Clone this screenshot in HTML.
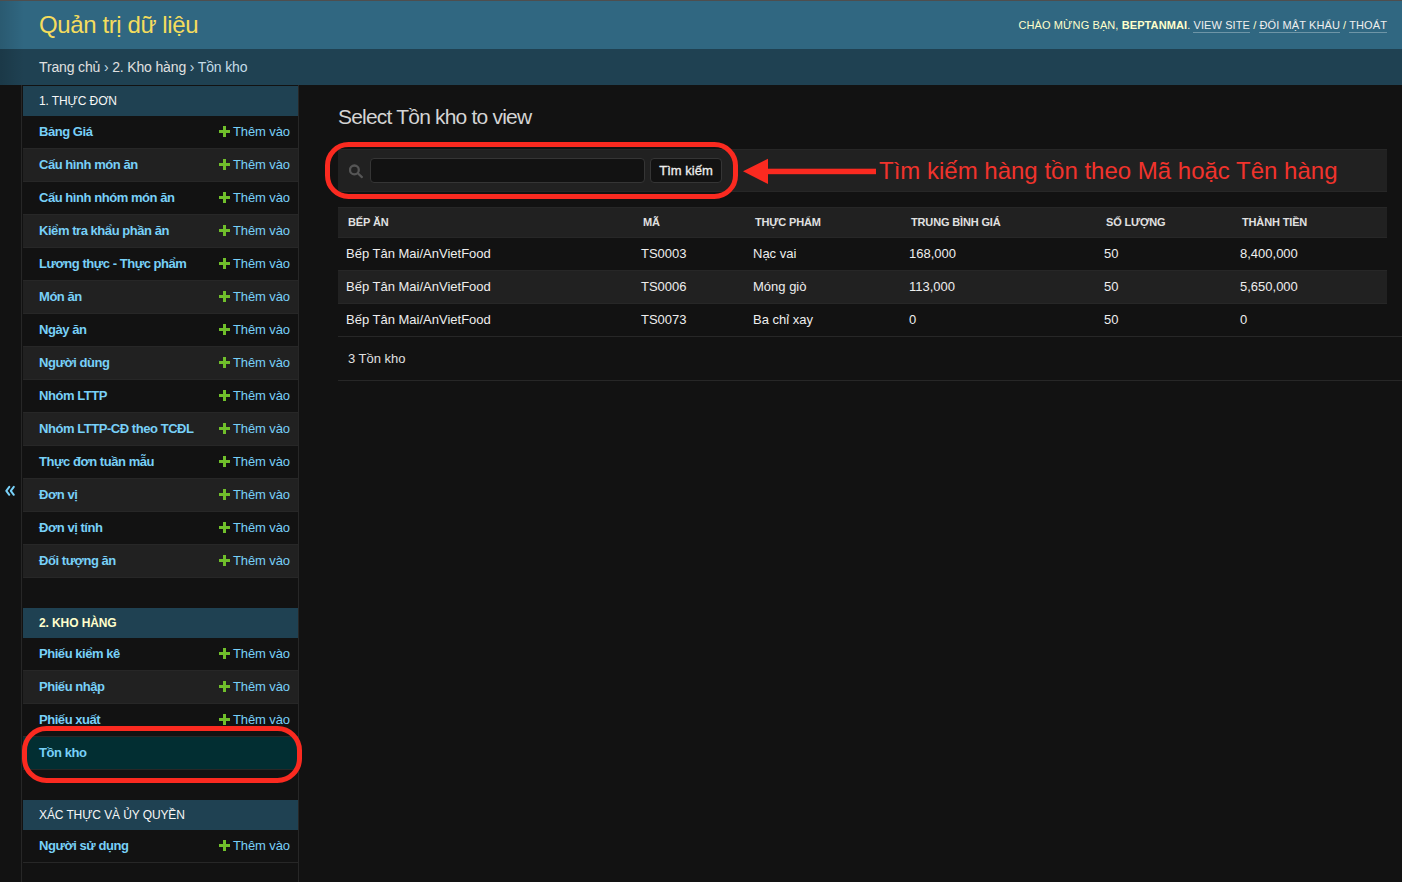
<!DOCTYPE html>
<html lang="vi">
<head>
<meta charset="utf-8">
<title>Tồn kho</title>
<style>
html,body{margin:0;padding:0;}
body{width:1402px;height:882px;overflow:hidden;position:relative;background:#121212;font-family:"Liberation Sans",sans-serif;color:#eeeeee;}
.abs{position:absolute;}
#topline{left:0;top:0;width:1402px;height:1px;background:#4e4e4e;}
#header{left:0;top:1px;width:1402px;height:48px;background:#306781;}
#brand{left:39px;top:0;font-size:24px;line-height:47px;letter-spacing:-0.4px;color:#f5dd5d;white-space:nowrap;}
#usertools{right:15px;top:1px;font-size:11px;line-height:47px;color:#ffffcc;text-transform:uppercase;letter-spacing:0.1px;white-space:nowrap;}
#usertools b{color:#ffffcc;}
#usertools a{color:#f0f0f0;text-decoration:none;border-bottom:1px solid rgba(255,255,255,0.3);padding-bottom:1px;}
#crumbs{left:0;top:49px;width:1402px;height:36px;background:#1f4152;}
#crumbtext{left:39px;top:0px;font-size:14px;line-height:37px;letter-spacing:-0.15px;color:#c4dce8;white-space:nowrap;}
#crumbtext a{color:#e0e0e0;text-decoration:none;}
#shade{left:0;top:1px;width:24px;height:84px;background:linear-gradient(to right,rgba(0,0,0,0.13),rgba(0,0,0,0));}
#toggle{left:0;top:85px;width:21px;height:797px;border-right:1px solid #272727;}
#toggle span{position:absolute;left:4px;top:394px;font-size:20px;color:#78d0f8;}
#sidebar{left:23px;top:86px;width:275px;height:796px;}
#sideborder{left:298px;top:85px;width:1px;height:797px;background:#272727;}
.mod{position:absolute;left:0;width:275px;}
.cap{height:30px;background:#1f4152;color:#f7f7f7;font-size:12px;letter-spacing:-0.1px;line-height:30px;padding-left:16px;box-sizing:border-box;text-transform:uppercase;}
.cap.cur{color:#ffffcc;font-weight:bold;}
.row{position:relative;height:33px;box-sizing:border-box;border-bottom:1px solid #272727;background:#121212;font-size:13px;}
.row.e{background:#212121;}
.row.sel{background:#022e32;}
.row .nm{position:absolute;left:16px;top:0;line-height:32px;color:#78d0f8;font-weight:bold;letter-spacing:-0.45px;white-space:nowrap;}
.row .add{position:absolute;right:8px;top:0;line-height:32px;color:#78d0f8;white-space:nowrap;padding-left:14px;letter-spacing:-0.1px;}
.plus{position:absolute;left:0;top:10px;width:11px;height:11px;}
.plus:before{content:"";position:absolute;left:4px;top:0;width:3px;height:11px;background:#70bf2b;}
.plus:after{content:"";position:absolute;left:0;top:4px;width:11px;height:3px;background:#70bf2b;}

#content{left:0;top:0;width:1402px;height:882px;}
#h1{left:338px;top:105px;font-size:21px;line-height:24px;letter-spacing:-0.8px;color:#d4d4d4;white-space:nowrap;}
#toolbar{left:338px;top:149px;width:1049px;height:43px;background:#212121;border-top:1px solid #272727;border-bottom:1px solid #272727;box-sizing:border-box;}
#searchicon{left:11px;top:14px;}
#searchbar{left:32px;top:8px;width:275px;height:25px;box-sizing:border-box;background:#121212;border:1px solid #353535;border-radius:4px;}
#searchbtn{left:312px;top:8px;width:72px;-webkit-text-stroke:0.3px #eeeeee;height:25px;box-sizing:border-box;background:#121212;border:1px solid #353535;border-radius:4px;font-size:13px;line-height:23px;text-align:center;color:#eeeeee;white-space:nowrap;}
#thead{left:338px;top:207px;width:1049px;height:31px;background:#212121;border-top:1px solid #272727;border-bottom:1px solid #272727;box-sizing:border-box;}
.th{position:absolute;top:0;line-height:29px;font-size:11px;font-weight:bold;letter-spacing:-0.15px;color:#e0e0e0;text-transform:uppercase;white-space:nowrap;}
.trow{left:338px;width:1049px;height:33px;box-sizing:border-box;border-bottom:1px solid #272727;background:#121212;}
.trow.e{background:#212121;}
.td{position:absolute;top:0;line-height:32px;font-size:13px;color:#eeeeee;white-space:nowrap;}
#pagline1{left:1387px;top:336px;width:15px;height:1px;background:#272727;}
#pagtext{left:348px;top:348px;font-size:13px;line-height:22px;color:#e0e0e0;white-space:nowrap;}
#pagline2{left:338px;top:380px;width:1064px;height:1px;background:#272727;}
#annottext{left:879px;top:156px;font-size:24px;line-height:30px;color:#f0332c;white-space:nowrap;}
</style>
</head>
<body>
<div id="topline" class="abs"></div>
<div id="header" class="abs">
  <div id="brand" class="abs">Quản trị dữ liệu</div>
  <div id="usertools" class="abs">Chào mừng bạn, <b>beptanmai</b>. <a>View site</a> / <a>Đổi mật khẩu</a> / <a>Thoát</a></div>
</div>
<div id="crumbs" class="abs">
  <div id="crumbtext" class="abs"><a>Trang chủ</a> › <a>2. Kho hàng</a> › Tồn kho</div>
</div>
<div id="shade" class="abs"></div>
<div id="toggle" class="abs"></div><svg class="abs" style="left:0;top:480px" width="21" height="22" viewBox="0 0 21 22"><polyline points="9.3,6.8 6.3,10.8 9.3,14.8" fill="none" stroke="#78d0f8" stroke-width="2" stroke-linecap="round" stroke-linejoin="round"/><polyline points="13.8,6.8 10.8,10.8 13.8,14.8" fill="none" stroke="#78d0f8" stroke-width="2" stroke-linecap="round" stroke-linejoin="round"/></svg>
<div id="sideborder" class="abs"></div>
<div id="sidebar" class="abs">
  <div class="mod" style="top:0">
    <div class="cap">1. Thực đơn</div>
    <div class="row"><span class="nm">Bảng Giá</span><span class="add"><i class="plus"></i>Thêm vào</span></div>
    <div class="row e"><span class="nm">Cấu hình món ăn</span><span class="add"><i class="plus"></i>Thêm vào</span></div>
    <div class="row"><span class="nm">Cấu hình nhóm món ăn</span><span class="add"><i class="plus"></i>Thêm vào</span></div>
    <div class="row e"><span class="nm">Kiểm tra khẩu phần ăn</span><span class="add"><i class="plus"></i>Thêm vào</span></div>
    <div class="row"><span class="nm">Lương thực - Thực phẩm</span><span class="add"><i class="plus"></i>Thêm vào</span></div>
    <div class="row e"><span class="nm">Món ăn</span><span class="add"><i class="plus"></i>Thêm vào</span></div>
    <div class="row"><span class="nm">Ngày ăn</span><span class="add"><i class="plus"></i>Thêm vào</span></div>
    <div class="row e"><span class="nm">Người dùng</span><span class="add"><i class="plus"></i>Thêm vào</span></div>
    <div class="row"><span class="nm">Nhóm LTTP</span><span class="add"><i class="plus"></i>Thêm vào</span></div>
    <div class="row e"><span class="nm">Nhóm LTTP-CĐ theo TCĐL</span><span class="add"><i class="plus"></i>Thêm vào</span></div>
    <div class="row"><span class="nm">Thực đơn tuần mẫu</span><span class="add"><i class="plus"></i>Thêm vào</span></div>
    <div class="row e"><span class="nm">Đơn vị</span><span class="add"><i class="plus"></i>Thêm vào</span></div>
    <div class="row"><span class="nm">Đơn vị tính</span><span class="add"><i class="plus"></i>Thêm vào</span></div>
    <div class="row e"><span class="nm">Đối tượng ăn</span><span class="add"><i class="plus"></i>Thêm vào</span></div>
  </div>
  <div class="mod" style="top:522px">
    <div class="cap cur">2. Kho hàng</div>
    <div class="row"><span class="nm">Phiếu kiểm kê</span><span class="add"><i class="plus"></i>Thêm vào</span></div>
    <div class="row e"><span class="nm">Phiếu nhập</span><span class="add"><i class="plus"></i>Thêm vào</span></div>
    <div class="row"><span class="nm">Phiếu xuất</span><span class="add"><i class="plus"></i>Thêm vào</span></div>
    <div class="row sel"><span class="nm">Tồn kho</span></div>
  </div>
  <div class="mod" style="top:714px">
    <div class="cap">Xác thực và Ủy quyền</div>
    <div class="row"><span class="nm">Người sử dụng</span><span class="add"><i class="plus"></i>Thêm vào</span></div>
  </div>
</div>

<div id="content" class="abs">
  <div id="h1" class="abs">Select Tồn kho to view</div>
  <div id="toolbar" class="abs">
    <svg id="searchicon" class="abs" width="15" height="15" viewBox="0 0 15 15"><circle cx="5.4" cy="5.9" r="4.4" fill="none" stroke="#555555" stroke-width="2.3"/><line x1="8.8" y1="9.2" x2="12.9" y2="13.1" stroke="#555555" stroke-width="2.2" stroke-linecap="round"/></svg>
    <div id="searchbar" class="abs"></div>
    <div id="searchbtn" class="abs">Tìm kiếm</div>
  </div>
  <div id="thead" class="abs">
    <span class="th" style="left:10px">Bếp ăn</span>
    <span class="th" style="left:305px">Mã</span>
    <span class="th" style="left:417px">Thực phẩm</span>
    <span class="th" style="left:573px">Trung bình giá</span>
    <span class="th" style="left:768px">Số lượng</span>
    <span class="th" style="left:904px">Thành tiền</span>
  </div>
  <div class="trow abs" style="top:238px">
    <span class="td" style="left:8px">Bếp Tân Mai/AnVietFood</span>
    <span class="td" style="left:303px">TS0003</span>
    <span class="td" style="left:415px">Nạc vai</span>
    <span class="td" style="left:571px">168,000</span>
    <span class="td" style="left:766px">50</span>
    <span class="td" style="left:902px">8,400,000</span>
  </div>
  <div class="trow e abs" style="top:271px">
    <span class="td" style="left:8px">Bếp Tân Mai/AnVietFood</span>
    <span class="td" style="left:303px">TS0006</span>
    <span class="td" style="left:415px">Móng giò</span>
    <span class="td" style="left:571px">113,000</span>
    <span class="td" style="left:766px">50</span>
    <span class="td" style="left:902px">5,650,000</span>
  </div>
  <div class="trow abs" style="top:304px">
    <span class="td" style="left:8px">Bếp Tân Mai/AnVietFood</span>
    <span class="td" style="left:303px">TS0073</span>
    <span class="td" style="left:415px">Ba chỉ xay</span>
    <span class="td" style="left:571px">0</span>
    <span class="td" style="left:766px">50</span>
    <span class="td" style="left:902px">0</span>
  </div>
  <div id="pagline1" class="abs"></div>
  <div id="pagtext" class="abs">3 Tồn kho</div>
  <div id="pagline2" class="abs"></div>
</div>
<svg id="annot" class="abs" width="1402" height="882" viewBox="0 0 1402 882" style="left:0;top:0">
  <rect x="327.5" y="144.5" width="408" height="52" rx="21" ry="21" fill="none" stroke="#fb2a20" stroke-width="5"/>
  <polygon points="743,171.3 768,158.8 768,184" fill="#fb2a20"/>
  <rect x="766" y="168.7" width="110" height="5.5" fill="#fb2a20"/>
  <rect x="24.5" y="728.5" width="275" height="52" rx="22" ry="22" fill="none" stroke="#fb2a20" stroke-width="5"/>
</svg>
<div id="annottext" class="abs">Tìm kiếm hàng tồn theo Mã hoặc Tên hàng</div>

</body>
</html>
